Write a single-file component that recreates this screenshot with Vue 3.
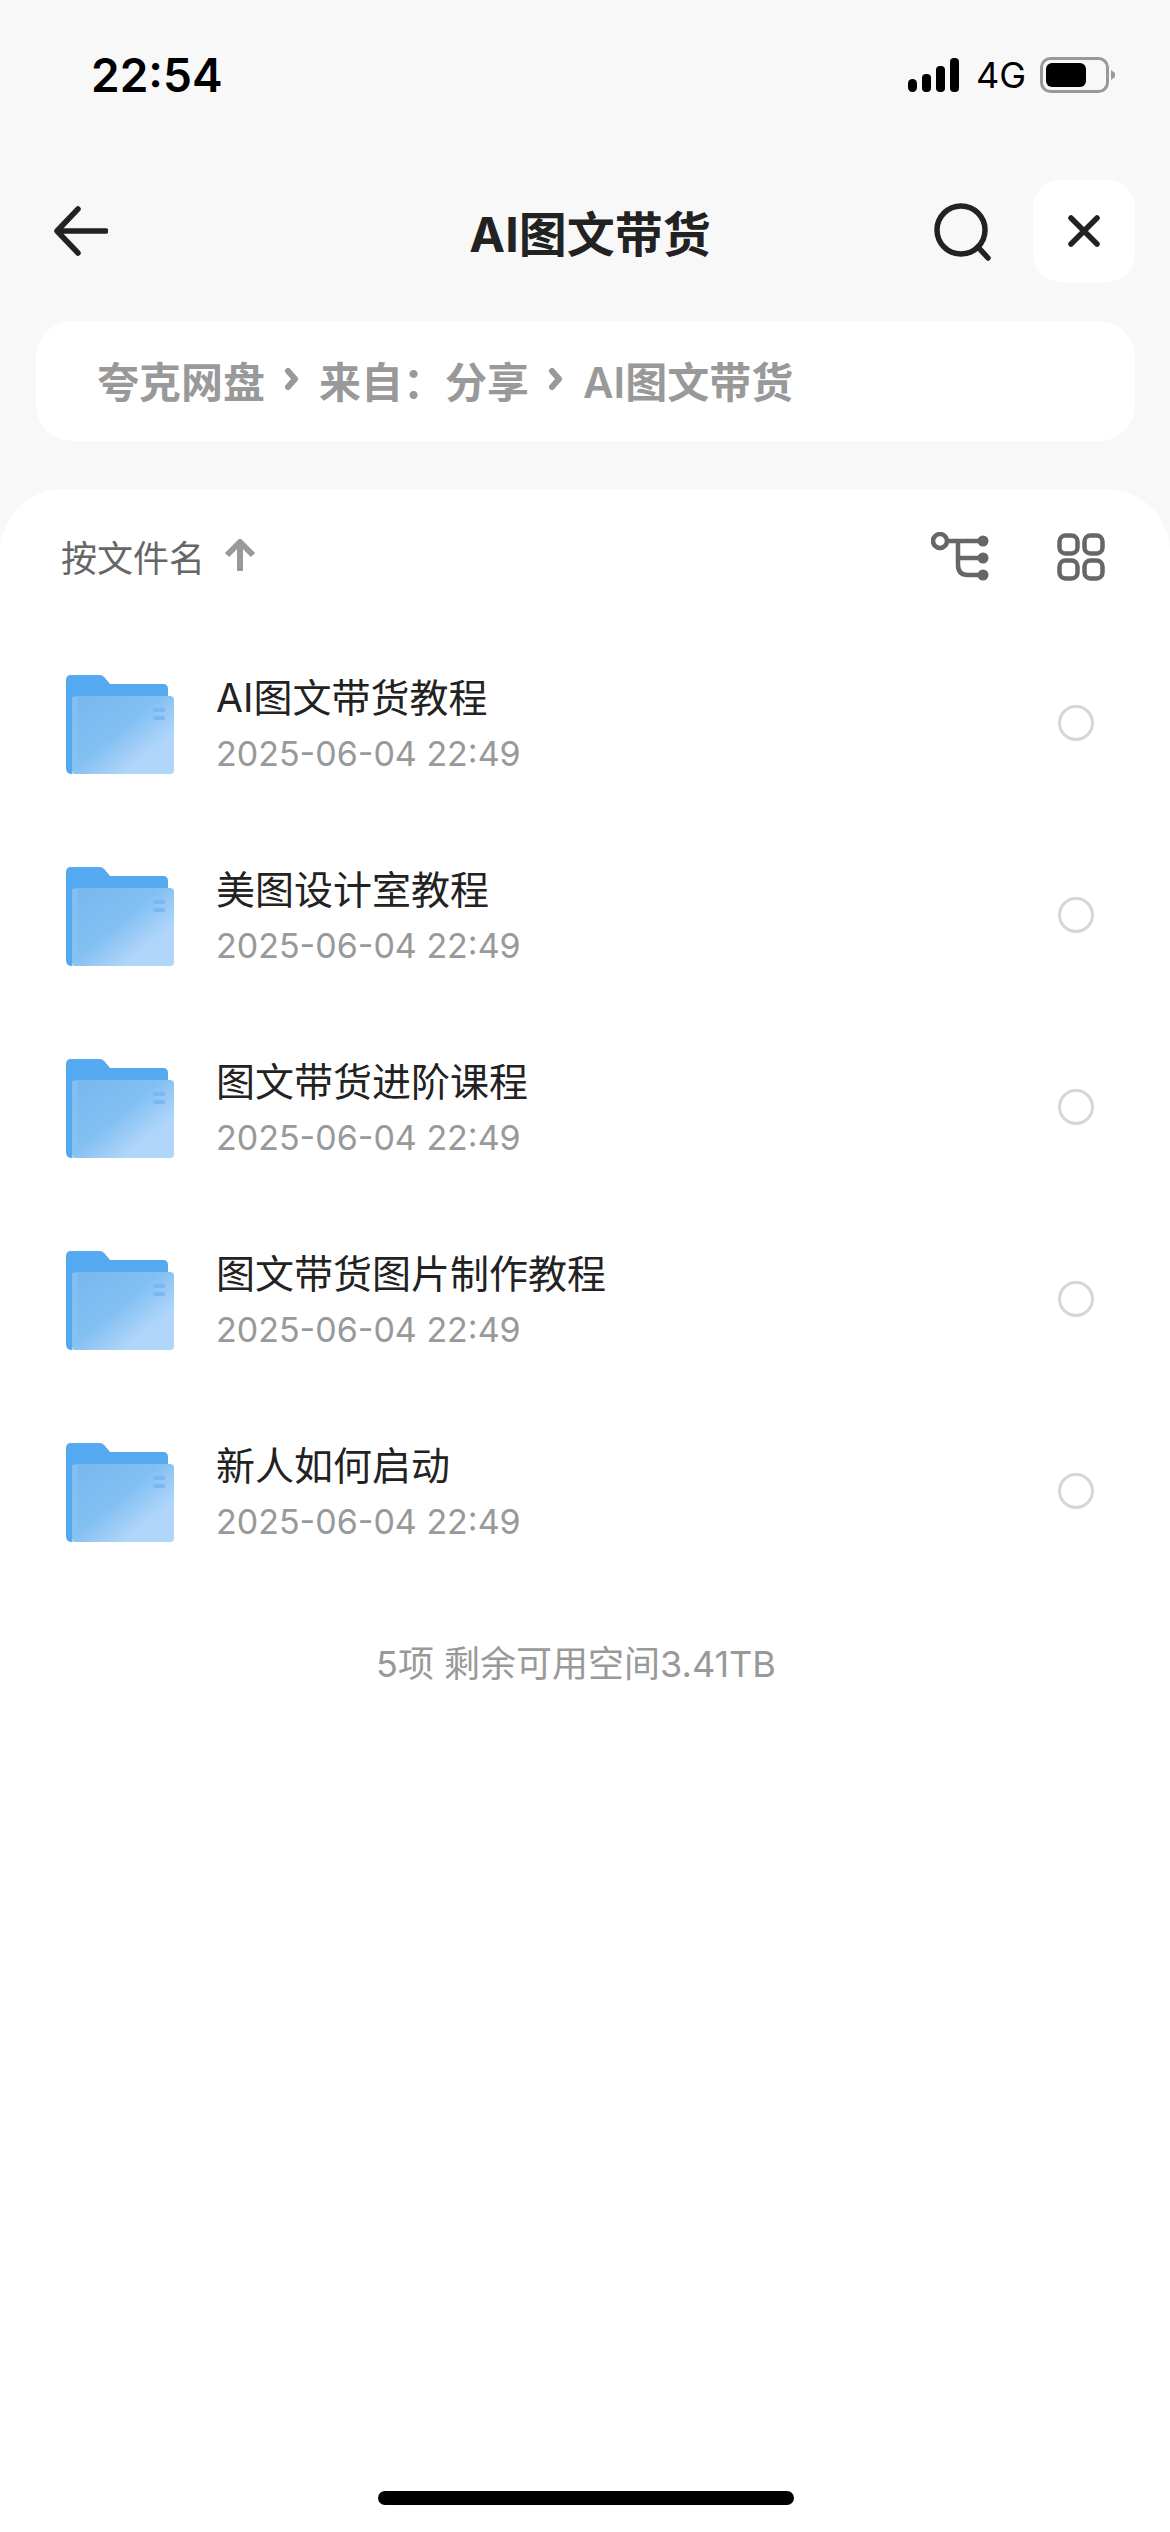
<script setup>
const items = ['AI图文带货教程', '美图设计室教程', '图文带货进阶课程', '图文带货图片制作教程', '新人如何启动']
const date = '2025-06-04 22:49'
</script>

<template>
  <div class="page">
    <div class="status">
      <span class="time">22:54</span>
      <div class="status-right">
        <svg class="signal" width="52" height="34" viewBox="0 0 52 34">
          <rect x="0" y="21" width="9" height="13" rx="4.5" />
          <rect x="14" y="16" width="9" height="18" rx="4" />
          <rect x="28" y="8" width="9" height="26" rx="4" />
          <rect x="42" y="0" width="9" height="34" rx="4" />
        </svg>
        <span class="net">4G</span>
        <svg class="battery" width="76" height="36" viewBox="0 0 76 36">
          <rect x="1.5" y="1.5" width="66" height="33" rx="9" fill="none" stroke="#999" stroke-width="3" />
          <rect x="6" y="6" width="40" height="24" rx="6" fill="#000" />
          <path d="M71 13 L75 16 V20 L71 23 Z" fill="#999" />
        </svg>
      </div>
    </div>

    <div class="nav">
      <svg class="back" width="54" height="50" viewBox="0 0 54 50">
        <path d="M52 25 H4 M24 3 L3 25 L24 47" fill="none" stroke="#222" stroke-width="5.5" stroke-linecap="round" stroke-linejoin="round" />
      </svg>
      <div class="title">AI图文带货</div>
      <svg class="search" width="58" height="58" viewBox="0 0 58 58">
        <circle cx="27" cy="27" r="24" fill="none" stroke="#222" stroke-width="5.5" />
        <path d="M44 44 L54 55" fill="none" stroke="#222" stroke-width="5.5" stroke-linecap="round" />
      </svg>
      <div class="close">
        <svg width="34" height="34" viewBox="0 0 34 34">
          <path d="M4 4 L30 30 M30 4 L4 30" fill="none" stroke="#222" stroke-width="5.5" stroke-linecap="round" />
        </svg>
      </div>
    </div>

    <div class="crumb">
      <span>夸克网盘</span>
      <svg class="chev" width="14" height="28" viewBox="0 0 14 28"><path d="M3 6 L10 14 L3 22" fill="none" stroke="#999" stroke-width="6" stroke-linecap="round" stroke-linejoin="round" /></svg>
      <span>来自：分享</span>
      <svg class="chev" width="14" height="28" viewBox="0 0 14 28"><path d="M3 6 L10 14 L3 22" fill="none" stroke="#999" stroke-width="6" stroke-linecap="round" stroke-linejoin="round" /></svg>
      <span>AI图文带货</span>
    </div>

    <div class="sheet">
      <div class="sort">
        <span class="sort-label">按文件名</span>
        <svg class="arrow-up" width="32" height="34" viewBox="0 0 32 34">
          <path d="M16 32 V4 M3 16 L16 3 L29 16" fill="none" stroke="#999" stroke-width="6" stroke-linejoin="round" />
        </svg>
        <svg class="tree" width="60" height="50" viewBox="0 0 60 50">
          <circle cx="9" cy="9" r="7" fill="none" stroke="#666" stroke-width="4.5" />
          <path d="M16 9 H52 M27 9 V33 Q27 43 37 43 H52 M27 26 H52" fill="none" stroke="#666" stroke-width="4.5" />
          <circle cx="52" cy="9" r="5.5" fill="#666" />
          <circle cx="52" cy="26" r="5.5" fill="#666" />
          <circle cx="52" cy="43" r="5.5" fill="#666" />
        </svg>
        <svg class="grid" width="48" height="48" viewBox="0 0 48 48">
          <g fill="none" stroke="#666" stroke-width="4.5">
            <rect x="2.5" y="2.5" width="18" height="18" rx="6" />
            <rect x="27.5" y="2.5" width="18" height="18" rx="6" />
            <rect x="2.5" y="27.5" width="18" height="18" rx="6" />
            <rect x="27.5" y="27.5" width="18" height="18" rx="6" />
          </g>
        </svg>
      </div>

      <div class="list">
        <div v-for="(name, i) in items" :key="name" class="row">
          <svg class="folder" width="108" height="100" viewBox="0 0 108 100">
            <defs>
              <linearGradient :id="'f' + i" x1="0.1" y1="0.15" x2="0.85" y2="0.85">
                <stop offset="0" stop-color="#7ab9f0" />
                <stop offset="0.45" stop-color="#82bff2" />
                <stop offset="0.85" stop-color="#afd5fa" />
              </linearGradient>
            </defs>
            <path d="M5 0 H33 Q37 0 39 3 L44 9 H97 Q102 9 102 14 V60 H6 V99 Q0 99 0 93 V5 Q0 0 5 0 Z" fill="#54a9f0" />
            <rect x="6" y="21" width="102" height="78" rx="4" :fill="'url(#f' + i + ')'" />
            <rect x="6" y="22" width="6" height="77" fill="#8cc3f2" opacity="0.55" />
            <rect x="87" y="33" width="12" height="4" rx="2" fill="#7ab8f2" />
            <rect x="87" y="41" width="12" height="4" rx="2" fill="#7ab8f2" />
          </svg>
          <div class="meta">
            <div class="name">{{ name }}</div>
            <div class="date">{{ date }}</div>
          </div>
          <div class="radio"></div>
        </div>
      </div>

      <div class="footer">5项 剩余可用空间3.41TB</div>
      <div class="home"></div>
    </div>
  </div>
</template>

<style scoped>
.page {
  width: 1170px;
  height: 2532px;
  background: #f8f8f8;
  display: flex;
  flex-direction: column;
  font-family: Inter, "Noto Sans CJK SC", sans-serif;
  overflow: hidden;
}
.status {
  height: 150px;
  flex: none;
  display: flex;
  justify-content: space-between;
  align-items: center;
  padding: 0 54px 0 91px;
  box-sizing: border-box;
}
.time {
  font-size: 46px;
  font-weight: 600;
  color: #000;
}
.status-right {
  display: flex;
  align-items: center;
  gap: 14px;
}
.signal { fill: #000; margin-right: 2px; }
.net {
  font-size: 36px;
  color: #000;
}
.nav {
  flex: none;
  height: 102px;
  margin-top: 30px;
  padding: 0 35px 0 54px;
  display: flex;
  align-items: center;
  position: relative;
}
.title {
  position: absolute;
  left: 10px;
  right: 0;
  text-align: center;
  font-size: 48px;
  font-weight: 700;
  color: #222;
}
.search { margin-left: auto; margin-right: 41px; margin-top: 2px; position: relative; }
.close {
  width: 102px;
  height: 102px;
  background: #fff;
  border-radius: 28px;
  display: flex;
  align-items: center;
  justify-content: center;
  position: relative;
}
.crumb {
  flex: none;
  margin: 39px 35px 0 36px;
  height: 120px;
  background: #fff;
  border-radius: 36px;
  padding: 0 0 4px 61px;
  box-sizing: border-box;
  display: flex;
  align-items: center;
  gap: 20px;
  font-size: 42px;
  font-weight: 600;
  color: #999;
}
.sheet {
  flex: 1;
  margin-top: 48px;
  background: #fff;
  border-radius: 64px 64px 0 0;
  display: flex;
  flex-direction: column;
  position: relative;
}
.sort {
  height: 138px;
  flex: none;
  box-sizing: border-box;
  display: flex;
  align-items: center;
  padding: 0 65px 5px 61px;
}
.sort-label {
  font-size: 36px;
  color: #666;
}
.arrow-up { margin-left: 19px; }
.tree { margin-left: auto; margin-right: 66px; margin-top: 3px; }
.grid { margin-top: 3px; }
.list { display: flex; flex-direction: column; }
.row {
  height: 192px;
  display: flex;
  align-items: center;
  padding: 0 76px 0 66px;
}
.folder { flex: none; margin-top: 4px; }
.meta { flex: 1; margin-left: 42px; }
.name {
  font-size: 39px;
  color: #222;
  line-height: 54px;
}
.date {
  font-size: 34px;
  color: #999;
  line-height: 42px;
  margin-top: 8px;
}
.radio {
  width: 36px;
  height: 36px;
  box-sizing: border-box;
  border: 3px solid #d5d5dc;
  border-radius: 50%;
  flex: none;
}
.footer {
  margin-top: 48px;
  padding-right: 18px;
  text-align: center;
  font-size: 36px;
  color: #999;
}
.home {
  position: absolute;
  left: 378px;
  bottom: 27px;
  width: 416px;
  height: 14px;
  border-radius: 7px;
  background: #000;
}
</style>

<style>
html, body { margin: 0; background: #fff; }
</style>
